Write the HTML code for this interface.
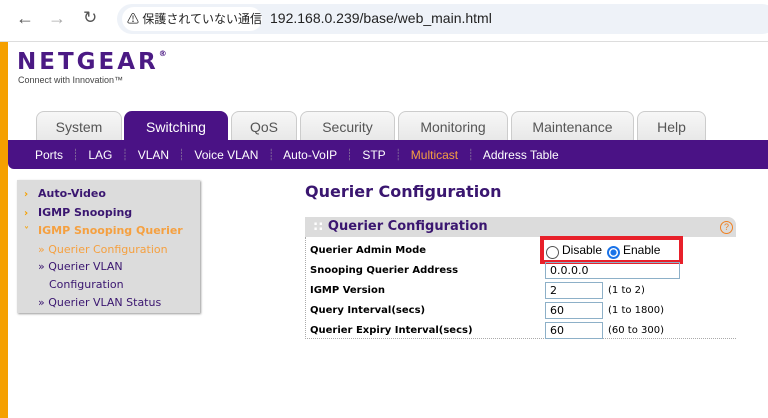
<!DOCTYPE html><html><head><style>
body{margin:0;width:768px;height:418px;overflow:hidden;background:#fff;font-family:"Liberation Sans","Noto Sans CJK JP",sans-serif;position:relative}
.a{position:absolute}
.tab{position:absolute;top:111px;height:29px;background:linear-gradient(#f7f7f7,#e8e8e8);border:1px solid #ccc;border-bottom:none;border-radius:8px 8px 0 0;font-size:14px;color:#555;text-align:center;line-height:30px;box-sizing:border-box}
.sub{position:absolute;top:146px;font-size:12px;color:#fff}
.lm{font-size:11px;font-weight:bold;color:#3a1670}
.row{position:absolute;left:310px;font-size:10px;font-weight:bold;font-family:"DejaVu Sans",sans-serif;color:#000}
.in{position:absolute;left:545px;height:17px;border:1px solid #8db0c8;box-sizing:border-box;font-size:11px;padding-left:4px;line-height:15px;font-family:"DejaVu Sans",sans-serif}
.rg{position:absolute;left:608px;font-size:10px;font-family:"DejaVu Sans",sans-serif}
.ar{color:#f5a000;font-size:10px;display:inline-block;width:14px}
</style></head><body>
<div class="a" style="left:0;top:0;width:768px;height:41px;background:#fff;border-bottom:1px solid #ddd"></div>
<div class="a" style="left:16px;top:8px;font-size:18px;color:#555">←</div>
<div class="a" style="left:48px;top:8px;font-size:18px;color:#aaa">→</div>
<div class="a" style="left:83px;top:8px;font-size:17px;color:#555">↻</div>
<div class="a" style="left:117px;top:4px;width:660px;height:30px;border-radius:15px;background:#eef2f8"></div>
<div class="a" style="left:122px;top:7px;width:140px;height:24px;border-radius:12px;background:#fff;font-size:12px;line-height:24px;padding-left:5px;box-sizing:border-box;color:#222">⚠ 保護されていない通信</div>
<div class="a" style="left:270px;top:10px;font-size:14px;color:#222">192.168.0.239/base/web_main.html</div>
<div class="a" style="left:0;top:42px;width:8px;height:376px;background:#f5a000"></div>
<div class="a" style="left:8px;top:42px;width:760px;height:376px;background:#fff;border-radius:8px 0 0 0"></div>
<div class="a" style="left:17px;top:49px;font-size:23px;font-weight:900;letter-spacing:3px;color:#4b1a84;font-family:'DejaVu Sans',sans-serif">NETGEAR<span style="font-size:8px;vertical-align:top;letter-spacing:0">®</span></div>
<div class="a" style="left:18px;top:75px;font-size:9px;color:#444">Connect with Innovation™</div>
<div class="tab" style="left:36px;width:86px">System</div>
<div class="tab" style="left:124px;width:104px;background:#4a1285;color:#fff;border-color:#4a1285">Switching</div>
<div class="tab" style="left:231px;width:66px">QoS</div>
<div class="tab" style="left:300px;width:95px">Security</div>
<div class="tab" style="left:398px;width:110px">Monitoring</div>
<div class="tab" style="left:511px;width:123px">Maintenance</div>
<div class="tab" style="left:637px;width:69px">Help</div>
<div class="a" style="left:8px;top:140px;width:760px;height:29px;background:#4a1285;border-radius:0 0 0 6px"></div>
<div class="sub" style="left:35px">Ports <span style="color:#aaa">&nbsp;┊</span>&nbsp; LAG <span style="color:#aaa">&nbsp;┊</span>&nbsp; VLAN <span style="color:#aaa">&nbsp;┊</span>&nbsp; Voice VLAN <span style="color:#aaa">&nbsp;┊</span>&nbsp; Auto-VoIP <span style="color:#aaa">&nbsp;┊</span>&nbsp; STP <span style="color:#aaa">&nbsp;┊</span>&nbsp; <span style="color:#f5a040">Multicast</span> <span style="color:#aaa">&nbsp;┊</span>&nbsp; Address Table</div>
<div class="a" style="left:17px;top:180px;width:183px;height:133px;background:#dcdcdc;box-shadow:1px 1px 2px #999"></div>
<div class="a lm" style="left:24px;top:185px;line-height:17.6px;font-family:'DejaVu Sans',sans-serif">
<div><span class="ar">›</span>Auto-Video</div>
<div><span class="ar">›</span>IGMP Snooping</div>
<div style="color:#f5a040"><span class="ar">˅</span>IGMP Snooping Querier</div>
<div style="font-weight:normal;color:#f5a040;padding-left:14px">» Querier Configuration</div>
<div style="font-weight:normal;padding-left:14px">» Querier VLAN</div>
<div style="font-weight:normal;padding-left:25px">Configuration</div>
<div style="font-weight:normal;padding-left:14px">» Querier VLAN Status</div>
</div>
<div class="a" style="left:305px;top:182px;font-size:16px;font-weight:bold;color:#3a1670;font-family:'DejaVu Sans',sans-serif">Querier Configuration</div>
<div class="a" style="left:305px;top:217px;width:431px;height:20px;background:#dcdcdc;border-radius:0 8px 0 0"></div>
<div class="a" style="left:313px;top:219px;font-size:13px;font-weight:bold;color:#3a1670;font-family:'DejaVu Sans',sans-serif"><span style="color:#fff">::</span> Querier Configuration</div>
<div class="a" style="left:720px;top:221px;width:11px;height:11px;border:1px solid #f08020;border-radius:50%;font-size:9px;color:#f08020;text-align:center;line-height:11px">?</div>
<div class="a" style="left:305px;top:237px;width:431px;height:102px;border-left:1px dotted #aaa;border-bottom:1px dotted #aaa;box-sizing:border-box"></div>
<div class="row" style="top:245px">Querier Admin Mode</div>
<div class="row" style="top:265px">Snooping Querier Address</div>
<div class="row" style="top:285px">IGMP Version</div>
<div class="row" style="top:305px">Query Interval(secs)</div>
<div class="row" style="top:325px">Querier Expiry Interval(secs)</div>
<div class="a" style="left:540px;top:236px;width:143px;height:28px;border:4px solid #e8202a;box-sizing:border-box"></div>
<div class="a" style="left:546px;top:246px;width:11px;height:11px;border:1px solid #555;border-radius:50%"></div>
<div class="a" style="left:562px;top:243px;font-size:12px">Disable</div>
<div class="a" style="left:607px;top:246px;width:9px;height:9px;border:2px solid #1a73e8;border-radius:50%;background:radial-gradient(#1a73e8 45%,#fff 50%)"></div>
<div class="a" style="left:623px;top:243px;font-size:12px">Enable</div>
<div class="in" style="top:262px;width:135px">0.0.0.0</div>
<div class="in" style="top:282px;width:58px">2</div><div class="rg" style="top:285px">(1 to 2)</div>
<div class="in" style="top:302px;width:58px">60</div><div class="rg" style="top:305px">(1 to 1800)</div>
<div class="in" style="top:322px;width:58px">60</div><div class="rg" style="top:325px">(60 to 300)</div>
</body></html>
